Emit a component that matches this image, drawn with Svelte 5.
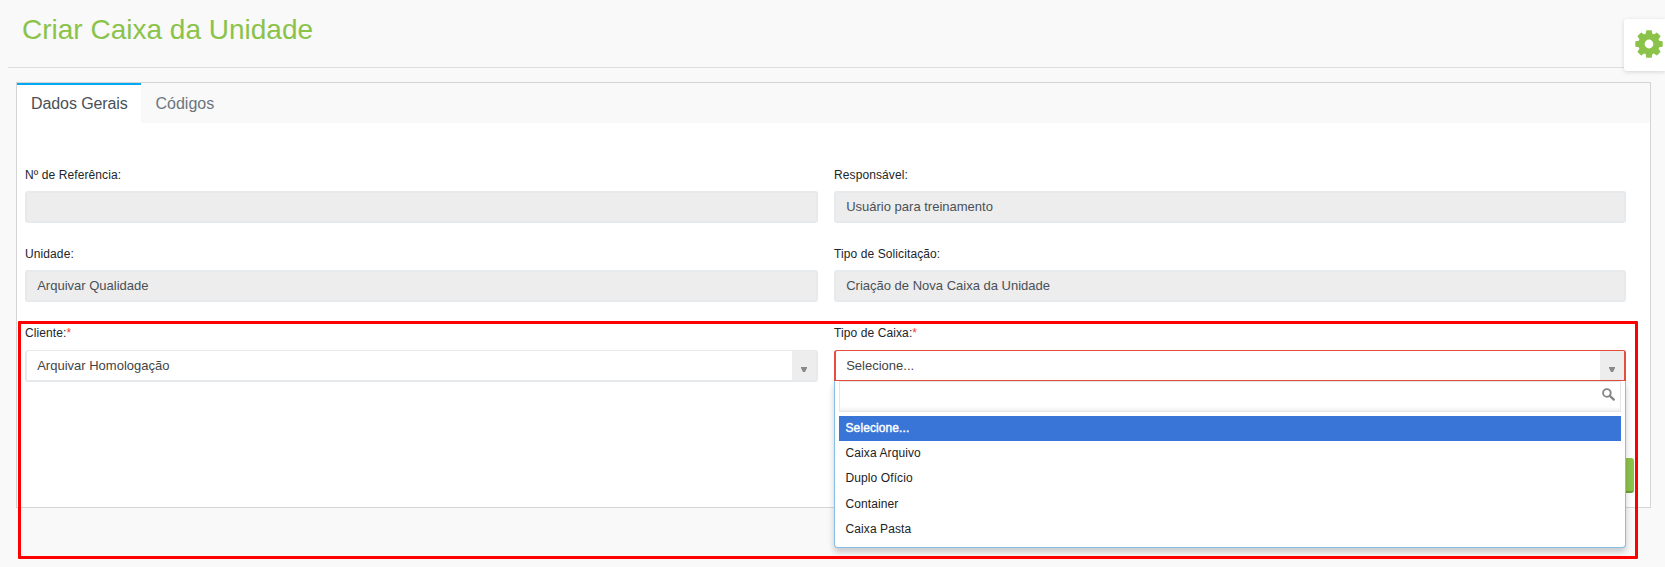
<script>
  const fields = [
    { label: 'Nº de Referência:', value: '' },
    { label: 'Responsável:', value: 'Usuário para treinamento' },
    { label: 'Unidade:', value: 'Arquivar Qualidade' },
    { label: 'Tipo de Solicitação:', value: 'Criação de Nova Caixa da Unidade' },
    { label: 'Cliente:', value: 'Arquivar Homologação', select: true },
    { label: 'Tipo de Caixa:', value: 'Selecione...', select: true, open: true }
  ];
  const options = ['Selecione...', 'Caixa Arquivo', 'Duplo Ofício', 'Container', 'Caixa Pasta'];
</script>

<div class="page">
  <header><h1>Criar Caixa da Unidade</h1></header>

  <main class="panel">
    <nav>
      <span class="tab active">Dados Gerais</span>
      <span class="tab">Códigos</span>
    </nav>
    <div class="form">
      {#each fields as f}
        <div class="field">
          <span class="label" class:required={f.select}>{f.label}{#if f.select}<b>*</b>{/if}</span>
          <div class="control" class:select={f.select} class:open={f.open}>
            <span class="value">{f.value}</span>
            {#if f.select}
              <span class="arrow"><svg width="6" height="5" viewBox="0 0 6 5"><path d="M0 0h6v1L4 5H2L0 1z" fill="#888" /></svg></span>
            {/if}
          </div>
          {#if f.open}
            <div class="drop">
              <div class="search">
                <svg width="13" height="13" viewBox="0 0 13 13" fill="none" stroke="#858585">
                  <circle cx="4.9" cy="4.9" r="3.8" stroke-width="1.9" />
                  <path d="M7.8 7.8l4 3.8" stroke-width="2.3" stroke-linecap="round" />
                </svg>
              </div>
              <ul>
                {#each options as o, i}
                  <li class:on={i === 0}>{o}</li>
                {/each}
              </ul>
            </div>
          {/if}
        </div>
      {/each}
    </div>
    <div class="actions"><button aria-label="Salvar"></button></div>
  </main>

  <div class="settings">
    <svg width="28" height="28" viewBox="0 0 28 28">
      <g fill="#8bc34a">
        {#each [0, 45, 90, 135] as a}
          <path transform="rotate({a} 14 14)" d="M11.2 .8Q11.2 .3 11.8 .3H16.2Q16.8 .3 16.8 .8L17.5 5V23L16.8 27.2Q16.8 27.7 16.2 27.7H11.8Q11.2 27.7 11.2 27.2L10.5 23V5z" />
        {/each}
        <circle cx="14" cy="14" r="10.7" />
      </g>
      <circle cx="14" cy="14" r="4.4" fill="#fff" />
    </svg>
  </div>
  <div class="highlight"></div>
</div>

<style>
  :global(body) { background: #f9f9f9; }
  .page {
    position: relative;
    box-sizing: border-box;
    width: 1665px;
    height: 567px;
    padding: 0 14px 0 8px;
    overflow: hidden;
    background: #f9f9f9;
    font-family: "Liberation Sans", Arial, sans-serif;
  }
  header {
    box-sizing: border-box;
    height: 68px;
    border-bottom: 1px solid #dedede;
    padding: 14px 0 0 14px;
  }
  h1 {
    margin: 0;
    font-size: 28px;
    line-height: 32px;
    font-weight: 400;
    color: #8bc34a;
  }
  .panel {
    box-sizing: border-box;
    margin: 14px 0 0 8px;
    width: 1635px;
    height: 426px;
    border: 1px solid #d5d5d5;
    background: #fff;
  }
  nav { display: flex; height: 40px; background: #f9f9f9; }
  .tab {
    box-sizing: border-box;
    border-top: 2px solid transparent;
    padding: 9px 14px 0 14.5px;
    font-size: 16px;
    line-height: 19px;
    white-space: nowrap;
    color: #6c757d;
  }
  .tab.active {
    width: 124px;
    padding-left: 14px;
    border-color: #03a9f4;
    background: #fff;
    color: #495057;
    letter-spacing: -.09px;
  }
  .form {
    display: grid;
    grid-template-columns: 793px 792px;
    grid-template-rows: 79px 80px 32px;
    column-gap: 16px;
    padding: 43px 0 0 8px;
  }
  .field { position: relative; }
  .label {
    display: block;
    box-sizing: border-box;
    height: 25px;
    padding-top: 1px;
    font-size: 12px;
    line-height: 17px;
    letter-spacing: .1px;
    color: #212529;
  }
  .label.required { padding-top: 0; }
  .label b { color: #f44336; font-weight: 400; }
  .control {
    box-sizing: border-box;
    display: flex;
    justify-content: space-between;
    height: 32px;
    border: 2px solid #e6eaed;
    border-radius: 3px;
    background: #ededed;
  }
  .value {
    padding-left: 10.2px;
    font-size: 13px;
    line-height: 28px;
    color: #495057;
  }
  .select { background: #fff; border-top-width: 1px; }
  .select .value { color: #444; line-height: 30px; }
  .arrow {
    display: flex;
    width: 24px;
    align-items: center;
    justify-content: center;
    padding-top: 7px;
    background: #ededed;
    box-sizing: border-box;
  }
  .open {
    height: 31px;
    border: 1px solid #e84c3d;
    border-left-width: 2px;
    border-right-width: 2px;
    border-radius: 3px 3px 0 0;
  }
  .drop {
    position: absolute;
    z-index: 2;
    top: 56px;
    left: 0;
    right: 0;
    height: 167px;
    box-sizing: border-box;
    padding: 0 4px;
    border: 1px solid #85bfe8;
    border-top: 0;
    border-radius: 0 0 4px 4px;
    background: #fff;
    box-shadow: 0 4px 6px rgba(0, 0, 0, .2);
  }
  .search {
    display: flex;
    box-sizing: border-box;
    justify-content: flex-end;
    height: 31px;
    padding: 6px 5px 0;
    border: 1px solid #e6e6e6;
    background: linear-gradient(#fff 85%, #eee);
  }
  ul { list-style: none; margin: 4px 0 0; padding: 0; }
  li {
    height: 25.2px;
    padding-left: 6.5px;
    font-size: 12px;
    line-height: 24px;
    letter-spacing: .1px;
    color: #222;
  }
  .on { background: #3875d7; color: #fff; -webkit-text-stroke: .4px #fff; }
  .actions { display: flex; justify-content: flex-end; padding: 101px 16px 0; }
  button {
    width: 90px;
    height: 35px;
    border: 0;
    border-bottom: 2px solid #689f38;
    border-radius: 3px;
    background: #8bc34a;
  }
  .settings {
    position: absolute;
    left: 1624px;
    top: 19px;
    width: 41px;
    height: 52px;
    box-sizing: border-box;
    padding: 11px 0 0 11px;
    border-radius: 3px 0 0 3px;
    background: #fff;
    box-shadow: 0 1px 4px rgba(0, 0, 0, .15);
  }
  .settings svg { display: block; }
  .highlight {
    position: absolute;
    z-index: 3;
    left: 18px;
    top: 321px;
    width: 1620px;
    height: 238px;
    box-sizing: border-box;
    border: 3px solid #f00;
    border-radius: 1px;
  }
</style>
